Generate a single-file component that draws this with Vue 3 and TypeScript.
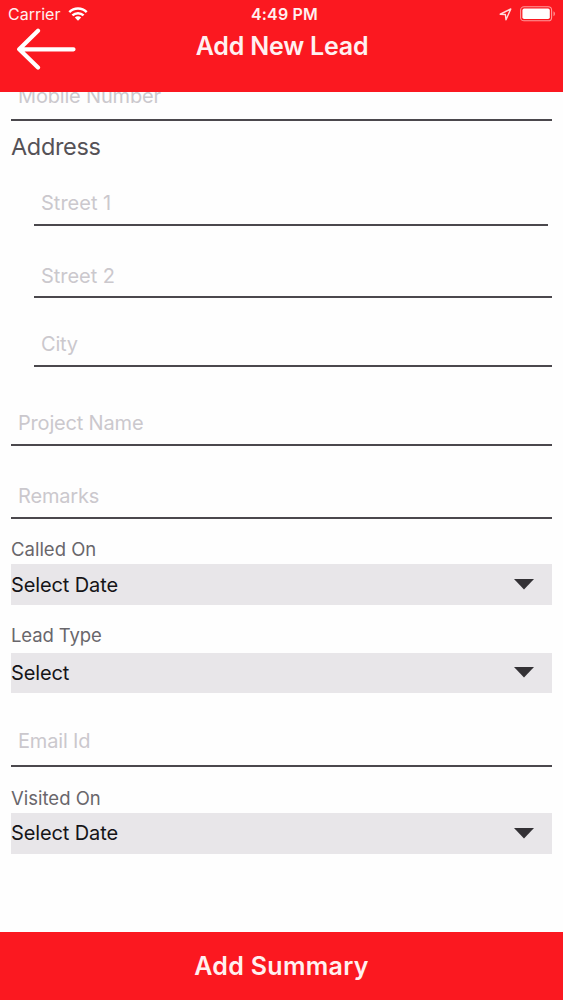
<script setup lang="ts">
interface Row {
  kind: 'input' | 'heading' | 'label' | 'select'
  text: string
  name: string
}

const rows: Row[] = [
  { kind: 'input', text: 'Mobile Number', name: 'mobile' },
  { kind: 'heading', text: 'Address', name: 'address' },
  { kind: 'input', text: 'Street 1', name: 'street1' },
  { kind: 'input', text: 'Street 2', name: 'street2' },
  { kind: 'input', text: 'City', name: 'city' },
  { kind: 'input', text: 'Project Name', name: 'project' },
  { kind: 'input', text: 'Remarks', name: 'remarks' },
  { kind: 'label', text: 'Called On', name: 'called' },
  { kind: 'select', text: 'Select Date', name: 'called-date' },
  { kind: 'label', text: 'Lead Type', name: 'type' },
  { kind: 'select', text: 'Select', name: 'type-value' },
  { kind: 'input', text: 'Email Id', name: 'email' },
  { kind: 'label', text: 'Visited On', name: 'visited' },
  { kind: 'select', text: 'Select Date', name: 'visited-date' },
]
</script>

<template>
  <div class="screen">
    <header class="header">
      <div class="status">
        <div class="carrier">
          <span>Carrier</span>
          <svg class="wifi" viewBox="0 0 20 14" width="20" height="14">
            <g fill="none" stroke="#fff" stroke-width="2.5">
              <path d="M1.3 5.1C6.2.4 13.8.4 18.7 5.1" />
              <path d="M4.4 8.4c3.2-3 8-3 11.2 0" />
            </g>
            <path d="M6.8 10.4c1.9-1.5 4.5-1.5 6.4 0L10 13.7z" fill="#fff" />
          </svg>
        </div>
        <span class="time">4:49 PM</span>
        <div class="indicators">
          <svg viewBox="0 0 13 13" width="13" height="13">
            <path d="M1.2 6.2 11.8 1 7 11.8 6.4 6.5z" fill="none" stroke="#ffdcdc" stroke-width="1.4" stroke-linejoin="round" />
          </svg>
          <svg viewBox="0 0 36 16" width="36" height="16">
            <rect x=".6" y=".8" width="31" height="14" rx="3.4" fill="none" stroke="#ff9a9a" stroke-width="1.1" />
            <rect x="2.4" y="2.6" width="27.4" height="10.4" rx="1.8" fill="#fff" />
            <path d="M33.5 5.3c1.9.8 1.9 4.2 0 5z" fill="#ff9a9a" />
          </svg>
        </div>
      </div>
      <div class="nav">
        <svg class="back" viewBox="0 0 60 42" width="60" height="42">
          <path d="M22 2.8 3.2 21.3 22 39.6M3.2 21.3H57.5" fill="none" stroke="#fff" stroke-width="4.2" stroke-linecap="round" stroke-linejoin="round" />
        </svg>
        <h1>Add New Lead</h1>
      </div>
    </header>

    <main class="form">
      <div v-for="row in rows" :key="row.name" :class="['row', row.kind, row.name]">
        <span>{{ row.text }}</span>
        <svg v-if="row.kind === 'select'" viewBox="0 0 20 11" width="20" height="11">
          <path d="M0 0h20L10 10.5z" fill="#333135" />
        </svg>
      </div>
    </main>

    <footer class="footer">Add Summary</footer>
  </div>
</template>

<style>
body {
  margin: 0;
}
</style>

<style scoped>
.screen {
  width: 563px;
  height: 1000px;
  display: flex;
  flex-direction: column;
  overflow: hidden;
  background: #fefefe;
  font-family: Inter, "Liberation Sans", sans-serif;
}
.header {
  box-sizing: border-box;
  flex: 0 0 92px;
  background: #fb1820;
  color: #fff0f0;
}
.status {
  display: grid;
  grid-template-columns: 1fr auto 1fr;
  align-items: center;
  height: 28px;
  padding: 0 8px;
  font-size: 16px;
  line-height: 28px;
}
.carrier {
  display: flex;
  align-items: center;
  gap: 8px;
}
.wifi {
  margin-top: -1px;
}
.time {
  font-weight: 600;
  padding-left: 6px;
  letter-spacing: 0.2px;
}
.indicators {
  display: flex;
  justify-content: flex-end;
  align-items: center;
  gap: 8px;
  margin-right: -1px;
}
.nav {
  display: grid;
  grid-template-columns: 80px 1fr 80px;
  height: 42px;
}
.back {
  margin-left: 16px;
}
h1 {
  margin: 0;
  text-align: center;
  font-size: 25px;
  font-weight: 600;
  line-height: 37px;
  letter-spacing: -0.2px;
  padding-left: 1px;
}
.form {
  flex: 1 1 0;
  min-height: 0;
  overflow: hidden;
  padding: 0 11px;
}
.row {
  box-sizing: border-box;
  display: flex;
  white-space: nowrap;
}
.input {
  align-items: flex-end;
  padding: 0 0 8px 7px;
  border-bottom: 2px solid #4b484d;
  color: #cbc8cd;
  font-size: 20px;
  line-height: 24px;
  letter-spacing: -0.18px;
}
.mobile {
  height: 39px;
  margin-top: -10px;
  padding-bottom: 11px;
}
.heading {
  height: 53px;
  color: #555257;
  font-size: 23.5px;
  line-height: 52px;
  letter-spacing: -0.35px;
}
.street1 {
  height: 52px;
  margin: 0 4px 0 23px;
  padding-bottom: 9px;
  letter-spacing: 0;
}
.street2 {
  height: 72px;
  margin-left: 23px;
  letter-spacing: -0.05px;
}
.city {
  height: 69px;
  margin-left: 23px;
  padding-bottom: 9px;
}
.project {
  height: 79px;
  padding-bottom: 9px;
}
.remarks {
  height: 73px;
  padding-bottom: 9px;
}
.label {
  align-items: flex-end;
  color: #69666b;
  font-size: 18.5px;
  line-height: 24px;
}
.called {
  height: 45px;
  padding-bottom: 3px;
}
.type {
  height: 48px;
  padding-bottom: 6px;
  letter-spacing: -0.1px;
}
.email {
  height: 74px;
  padding-bottom: 12px;
}
.visited {
  height: 46px;
  padding-bottom: 3px;
}
.select {
  height: 40.5px;
  align-items: center;
  justify-content: space-between;
  padding-right: 18px;
  background: #e8e6e9;
  color: #151417;
  font-size: 20px;
  line-height: 40px;
  letter-spacing: -0.12px;
}
.called-date span {
  padding-top: 1px;
}
.footer {
  flex: 0 0 68px;
  background: #fb1820;
  color: #fff0f0;
  text-align: center;
  font-size: 25px;
  font-weight: 600;
  line-height: 68px;
  letter-spacing: 0.3px;
}
</style>
